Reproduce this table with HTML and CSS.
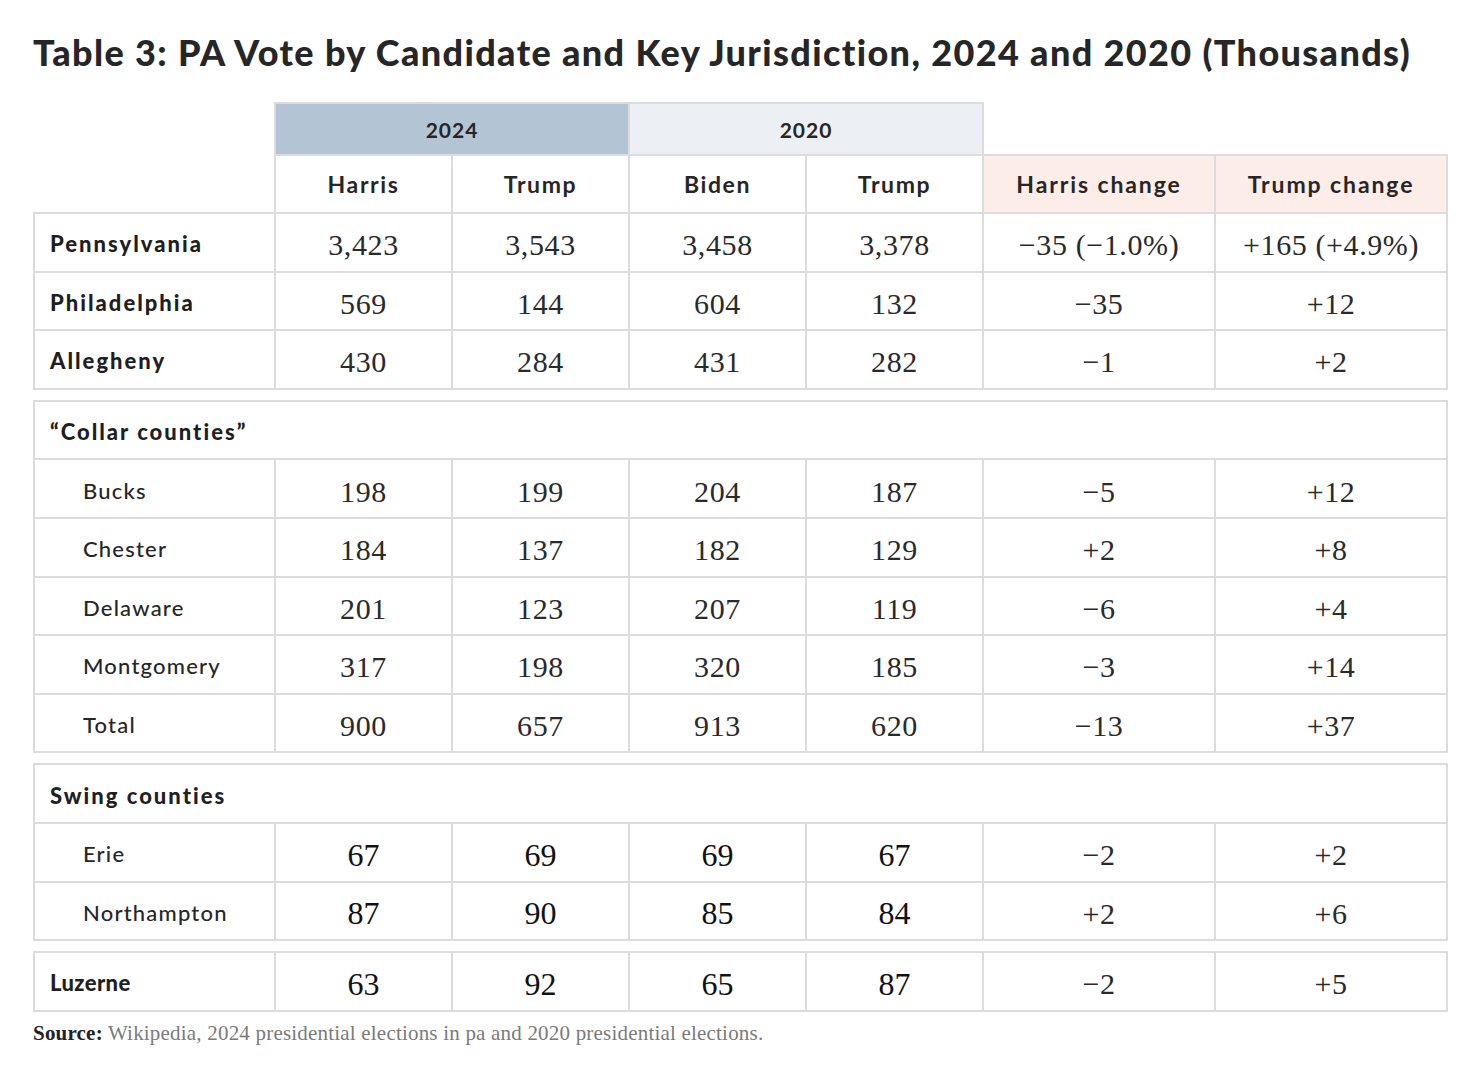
FILE: index.html
```html
<!DOCTYPE html>
<html lang="en">
<head>
<meta charset="utf-8">
<title>Table 3: PA Vote by Candidate and Key Jurisdiction</title>
<link rel="stylesheet" href="styles.css">
</head>
<body>
<main class="page">
  <h1 class="title">Table 3: PA Vote by Candidate and Key Jurisdiction, 2024 and 2020 (Thousands)</h1>

  <table class="vt">
    <colgroup><col class="c-label"><col class="c-num"><col class="c-num"><col class="c-num"><col class="c-num"><col class="c-chg"><col class="c-chg"></colgroup>
    <tr class="year-row">
      <td class="blank"></td>
      <th colspan="2" class="y2024">2024</th>
      <th colspan="2" class="y2020">2020</th>
      <td class="blank"></td>
      <td class="blank"></td>
    </tr>
    <tr class="head-row">
      <td class="blank"></td>
      <th>Harris</th>
      <th>Trump</th>
      <th>Biden</th>
      <th>Trump</th>
      <th class="chg">Harris change</th>
      <th class="chg">Trump change</th>
    </tr>
    <tr><td class="lbl">Pennsylvania</td><td class="n">3,423</td><td class="n">3,543</td><td class="n">3,458</td><td class="n">3,378</td><td class="n">−35 (−1.0%)</td><td class="n">+165 (+4.9%)</td></tr>
    <tr><td class="lbl">Philadelphia</td><td class="n">569</td><td class="n">144</td><td class="n">604</td><td class="n">132</td><td class="n">−35</td><td class="n">+12</td></tr>
    <tr><td class="lbl">Allegheny</td><td class="n">430</td><td class="n">284</td><td class="n">431</td><td class="n">282</td><td class="n">−1</td><td class="n">+2</td></tr>
  </table>

  <table class="vt block">
    <colgroup><col class="c-label"><col class="c-num"><col class="c-num"><col class="c-num"><col class="c-num"><col class="c-chg"><col class="c-chg"></colgroup>
    <tr class="grp"><td class="lbl" colspan="7">“Collar counties”</td></tr>
    <tr><td class="sub">Bucks</td><td class="n">198</td><td class="n">199</td><td class="n">204</td><td class="n">187</td><td class="n">−5</td><td class="n">+12</td></tr>
    <tr><td class="sub">Chester</td><td class="n">184</td><td class="n">137</td><td class="n">182</td><td class="n">129</td><td class="n">+2</td><td class="n">+8</td></tr>
    <tr><td class="sub">Delaware</td><td class="n">201</td><td class="n">123</td><td class="n">207</td><td class="n">119</td><td class="n">−6</td><td class="n">+4</td></tr>
    <tr><td class="sub">Montgomery</td><td class="n">317</td><td class="n">198</td><td class="n">320</td><td class="n">185</td><td class="n">−3</td><td class="n">+14</td></tr>
    <tr><td class="sub">Total</td><td class="n">900</td><td class="n">657</td><td class="n">913</td><td class="n">620</td><td class="n">−13</td><td class="n">+37</td></tr>
  </table>

  <table class="vt block">
    <colgroup><col class="c-label"><col class="c-num"><col class="c-num"><col class="c-num"><col class="c-num"><col class="c-chg"><col class="c-chg"></colgroup>
    <tr class="grp"><td class="lbl" colspan="7">Swing counties</td></tr>
    <tr><td class="sub">Erie</td><td class="n times">67</td><td class="n times">69</td><td class="n times">69</td><td class="n times">67</td><td class="n">−2</td><td class="n">+2</td></tr>
    <tr><td class="sub">Northampton</td><td class="n times">87</td><td class="n times">90</td><td class="n times">85</td><td class="n times">84</td><td class="n">+2</td><td class="n">+6</td></tr>
  </table>

  <table class="vt block">
    <colgroup><col class="c-label"><col class="c-num"><col class="c-num"><col class="c-num"><col class="c-num"><col class="c-chg"><col class="c-chg"></colgroup>
    <tr><td class="lbl cond">Luzerne</td><td class="n cond-num">63</td><td class="n cond-num">92</td><td class="n cond-num">65</td><td class="n cond-num">87</td><td class="n">−2</td><td class="n">+5</td></tr>
  </table>

  <p class="source"><strong>Source:</strong> Wikipedia, 2024 presidential elections in pa and 2020 presidential elections.</p>
</main>
</body>
</html>
```

FILE: styles.css
```css
html, body {
  margin: 0;
  padding: 0;
  background: #ffffff;
}

.page {
  padding: 30px 0 0 33px;
  color: #262626;
  font-family: "Lato", "Noto Sans", sans-serif;
}

.title {
  margin: 0 0 28px 0;
  font-family: "Lato", sans-serif;
  font-weight: 900;
  font-size: 36px;
  line-height: 44px;
  color: #262626;
  letter-spacing: 1.37px;
}

.vt {
  border-collapse: collapse;
  table-layout: fixed;
  width: 1414px;
}

.vt.block {
  margin-top: 10px;
}

.c-label { width: 241px; }
.c-num { width: 177px; }
.c-chg { width: 232px; }

.vt td, .vt th {
  border: 2px solid #dcdcdc;
  padding: 0;
  height: 50.6px;
  vertical-align: middle;
}

.vt td.blank {
  border: none;
}

.vt tr.grp td {
  height: 53.6px;
}

.year-row th,
.year-row td {
  height: 50px;
}

.year-row th {
  font-family: "Lato", sans-serif;
  font-weight: 700;
  font-size: 21px;
  letter-spacing: 1px;
  color: #262626;
}

.y2024 { background: #b3c5d4; }
.y2020 { background: #eceff3; }

.head-row th,
.head-row td {
  height: 56px;
}

.head-row th {
  font-family: "Lato", sans-serif;
  font-weight: 700;
  font-size: 23px;
  letter-spacing: 1.6px;
  color: #262626;
}

.head-row th.chg {
  background: #fcede8;
  letter-spacing: 1.9px;
}

.lbl {
  padding: 3px 0 0 15px !important;
  font-family: "Lato", sans-serif;
  font-weight: 900;
  font-size: 22px;
  letter-spacing: 2px;
  color: #1f1f1f;
}

.sub {
  padding: 3px 0 0 48px !important;
  font-family: "Lato", sans-serif;
  font-weight: 500;
  font-size: 22px;
  letter-spacing: 1.2px;
  color: #262626;
}

.n {
  text-align: center;
  font-family: "Liberation Serif", serif;
  font-size: 30px;
  letter-spacing: 0.6px;
  color: #2a2a2a;
  padding-top: 6px !important;
}

.n.times {
  font-size: 32px;
  letter-spacing: 0;
  color: #111;
}

.lbl.cond {
  font-weight: 900;
  letter-spacing: 0.4px;
}

.n.cond-num {
  font-size: 32px;
  letter-spacing: 0;
  color: #111;
}

.source {
  margin: 9px 0 0 0;
  font-family: "Liberation Serif", serif;
  font-size: 21px;
  letter-spacing: 0.2px;
  color: #7a7a7a;
}

.source strong {
  color: #222;
  font-weight: 700;
}
```
